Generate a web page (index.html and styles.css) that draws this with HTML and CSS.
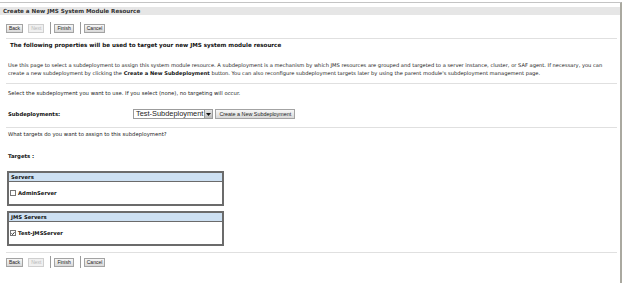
FILE: index.html
```html
<html>
  <head>
    <meta charset="UTF-8">
    <title>Create a New JMS System Module Resource</title>
    <link rel="stylesheet" href="styles.css">
  </head>
  <body>
    <div class="panel">
      <div class="title">Create a New JMS System Module Resource</div>

      <div class="btnbar">
        <span class="btn">Back</span>
        <span class="btn off">Next</span>
        <span class="sep"></span>
        <span class="btn">Finish</span>
        <span class="sep"></span>
        <span class="btn">Cancel</span>
      </div>

      <div class="rule"></div>

      <h2 class="intro">The following properties will be used to target your new JMS system module resource</h2>

      <p class="desc">Use this page to select a subdeployment to assign this system module resource. A subdeployment is a mechanism by which JMS resources are grouped and targeted to a server instance, cluster, or SAF agent. If necessary, you can create a new subdeployment by clicking the <b>Create a New Subdeployment</b> button. You can also reconfigure subdeployment targets later by using the parent module's subdeployment management page.</p>

      <div class="rule rule-a"></div>

      <p class="txt txt-a">Select the subdeployment you want to use. If you select (none), no targeting will occur.</p>

      <div class="field">
        <span class="lbl">Subdeployments:</span>
        <span class="select">
          <span class="select-val">Test-Subdeployment</span>
          <span class="select-arrow">
            <svg width="5" height="3" viewBox="0 0 5 3"><path d="M0 0 L5 0 L2.5 3 Z" fill="#111"/></svg>
          </span>
        </span>
        <span class="btn btn-new">Create a New Subdeployment</span>
      </div>

      <div class="rule rule-b"></div>

      <p class="txt txt-b">What targets do you want to assign to this subdeployment?</p>

      <p class="txt lbl targets">Targets :</p>

      <div class="box box-first">
        <div class="box-head">Servers</div>
        <div class="box-row">
          <span class="check"></span>
          <span>AdminServer</span>
        </div>
      </div>

      <div class="box">
        <div class="box-head">JMS Servers</div>
        <div class="box-row">
          <span class="check">
            <svg width="5" height="5" viewBox="0 0 5 5"><path d="M0.6 2.4 L1.9 3.8 L4.4 0.9" stroke="#111" stroke-width="1.1" fill="none"/></svg>
          </span>
          <span>Test-JMSServer</span>
        </div>
      </div>

      <div class="rule rule-c"></div>

      <div class="btnbar btnbar-bottom">
        <span class="btn">Back</span>
        <span class="btn off">Next</span>
        <span class="sep"></span>
        <span class="btn">Finish</span>
        <span class="sep"></span>
        <span class="btn">Cancel</span>
      </div>
    </div>
  </body>
</html>
```

FILE: styles.css
```css
body {
  margin: 0;
  padding-top: 2px;
  background: #fff;
  color: #222;
  font-family: 'DejaVu Sans', 'Liberation Sans', sans-serif;
  font-size: 5.3px;
}

.panel {
  width: 620px;
  height: 281px;
  border-top: 1px solid #c4c4c4;
  border-right: 2px solid #aaa9a0;
}

.title {
  margin-top: 4px;
  height: 8px;
  line-height: 8px;
  padding-left: 3px;
  background: #e6e6e6;
  font-weight: bold;
  font-size: 5.6px;
  color: #333;
}

.btnbar {
  display: flex;
  align-items: center;
  gap: 5px;
  height: 12px;
  margin-top: 7px;
  padding-left: 6px;
}

.btnbar-bottom {
  margin-top: 3px;
}

.btn {
  box-sizing: border-box;
  height: 9px;
  line-height: 7px;
  padding: 0 2px;
  border: 1px solid #a3a3a3;
  background: linear-gradient(#f7f7f7, #d9d9d9);
  font-family: 'Liberation Sans', sans-serif;
  font-size: 5px;
  color: #222;
}

.btn.off {
  color: #b8b8b8;
  border-color: #cfcfcf;
  background: #f0f0f0;
}

.sep {
  width: 1px;
  height: 12px;
  margin: 0 -2px 0 1px;
  background: #9a9a9a;
}

.rule {
  height: 1px;
  width: 611px;
  margin: 4px 0 0 6px;
  background: #e0e0e0;
}

.intro {
  margin: 2px 0 0 10px;
  line-height: 8px;
  font-size: 5.6px;
  font-weight: bold;
  color: #111;
}

.desc {
  margin: 12px 10px 0 8px;
  line-height: 8px;
  font-size: 5.15px;
}

.desc b {
  color: #111;
}

.rule-a {
  margin-top: 6px;
}

.txt {
  margin: 0 0 0 8px;
  line-height: 7px;
}

.txt-a {
  margin-top: 6px;
}

.field {
  display: flex;
  align-items: center;
  height: 10px;
  margin: 12px 0 0 8px;
}

.lbl {
  font-weight: bold;
  color: #111;
}

.field .lbl {
  width: 125px;
}

.select {
  display: flex;
  box-sizing: border-box;
  height: 10px;
  border: 1px solid #9c9c9c;
  background: #fff;
}

.select-val {
  padding: 0 1px 0 2px;
  line-height: 8px;
  font-family: 'Liberation Sans', sans-serif;
  font-size: 7.4px;
  color: #222;
}

.select-arrow {
  display: flex;
  align-items: center;
  justify-content: center;
  width: 7px;
  background: linear-gradient(#e6e6e6, #bdbdbd);
  border-left: 1px solid #999;
}

.btn-new {
  margin-left: 2px;
  height: 10px;
  line-height: 8px;
  padding: 0 3px;
  font-size: 5.4px;
}

.rule-b {
  margin-top: 8px;
}

.txt-b {
  margin-top: 3px;
}

.targets {
  margin-top: 15px;
}

.box {
  box-sizing: border-box;
  width: 217px;
  height: 35px;
  margin: 5px 0 0 7px;
  border: 2px solid #6b6b6b;
}

.box-first {
  margin-top: 11px;
}

.box-head {
  height: 8px;
  line-height: 8px;
  padding-left: 2px;
  background: #cde0f2;
  border-bottom: 1px solid #6b6b6b;
  font-weight: bold;
  color: #111;
}

.box-row {
  display: flex;
  align-items: center;
  gap: 2px;
  height: 22px;
  padding-left: 1px;
  font-weight: bold;
  color: #111;
}

.check {
  display: flex;
  align-items: center;
  justify-content: center;
  box-sizing: border-box;
  width: 6px;
  height: 6px;
  border: 1px solid #777;
  background: #fff;
}

.rule-c {
  margin-top: 6px;
}
```
